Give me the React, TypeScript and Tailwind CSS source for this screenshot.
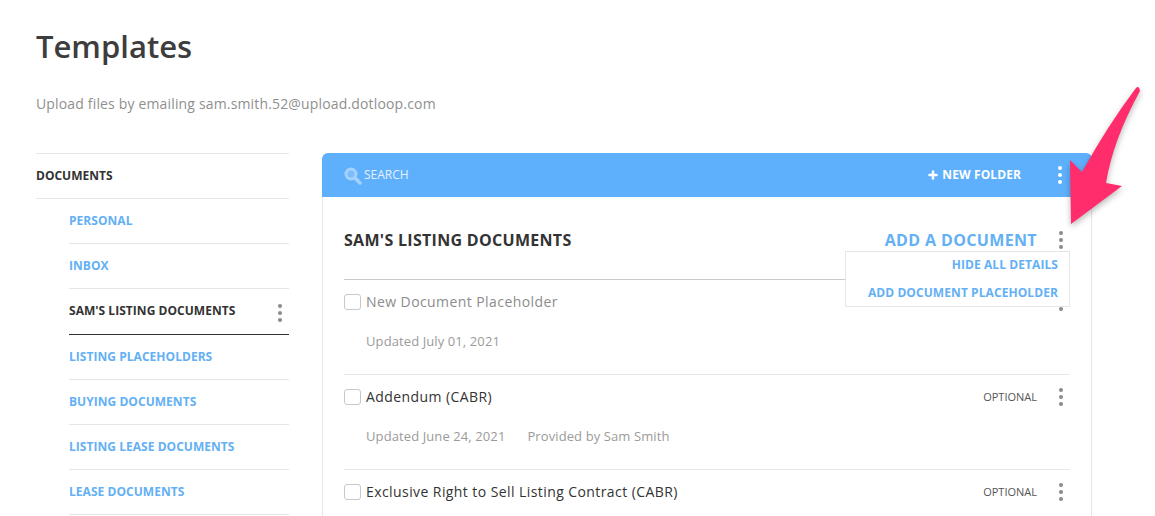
import { Plus } from "lucide-react";

const folders = [
  { name: "PERSONAL" },
  { name: "INBOX" },
  { name: "SAM'S LISTING DOCUMENTS", active: true },
  { name: "LISTING PLACEHOLDERS" },
  { name: "BUYING DOCUMENTS" },
  { name: "LISTING LEASE DOCUMENTS" },
  { name: "LEASE DOCUMENTS" },
];

const documents = [
  { name: "New Document Placeholder", updated: "Updated July 01, 2021", placeholder: true },
  { name: "Addendum (CABR)", updated: "Updated June 24, 2021", provider: "Provided by Sam Smith", tag: "OPTIONAL" },
  { name: "Exclusive Right to Sell Listing Contract (CABR)", updated: "", tag: "OPTIONAL" },
];

function Dots({ className }: { className: string }) {
  return (
    <div className={`flex flex-col gap-[3px] ${className}`}>
      <span className="h-1 w-1 rounded-full bg-current" />
      <span className="h-1 w-1 rounded-full bg-current" />
      <span className="h-1 w-1 rounded-full bg-current" />
    </div>
  );
}

function Sidebar() {
  return (
    <aside className="w-[253px] shrink-0">
      <div className="flex h-[46px] items-center border-y border-[#e6e6e6] text-xs font-bold text-[#333]">DOCUMENTS</div>
      <ul className="pl-[33px]">
        {folders.map((f) => (
          <li
            key={f.name}
            className={`flex items-center justify-between border-b pb-[1px] text-xs font-bold tracking-[0.04px] ${
              f.active ? "h-[46px] border-[#333] text-[#333]" : "h-[45px] border-[#e6e6e6] text-[#64b0f4]"
            }`}
          >
            {f.name}
            {f.active && <Dots className="mr-[7px] mt-[4px] text-[#8a8a8a]" />}
          </li>
        ))}
      </ul>
    </aside>
  );
}

function DocumentRow({ doc }: { doc: (typeof documents)[number] }) {
  return (
    <div className="h-[95px] border-b border-[#e8e8e8] pt-3">
      <div className="flex h-[20px] items-center">
        <span className="h-4 w-[17px] rounded-[3px] border border-[#c8c8c8]" />
        <span className={`ml-[5px] text-sm font-medium tracking-[0.42px] ${doc.placeholder ? "text-[#8c8c8c]" : "text-[#333]"}`}>
          {doc.name}
        </span>
        {doc.tag && <span className="ml-auto text-[11px] text-[#555]">{doc.tag}</span>}
        {doc.tag && <Dots className="ml-[22px] mr-[7px] text-[#8a8a8a]" />}
      </div>
      <div className="mt-[20px] flex gap-[22px] pl-[22px] text-[13px] tracking-[0.1px] text-[#9b9b9b]">
        {doc.updated && <span>{doc.updated}</span>}
        {doc.provider && <span>{doc.provider}</span>}
      </div>
    </div>
  );
}

function Panel() {
  return (
    <section className="relative w-[770px] shrink-0">
      <div className="flex h-[44px] items-center rounded-t-md bg-[#5fb0fc] pl-[22px] pr-[30px] text-white">
        <svg width="18" height="18" viewBox="0 0 18 18" stroke="#a3d2fd" fill="#7dbdfc" className="mt-[2px]">
          <circle cx="7" cy="7" r="5" strokeWidth="3" />
          <path d="M11 11l5 5" strokeWidth="3.5" strokeLinecap="round" />
        </svg>
        <span className="ml-[2px] text-xs text-[#e4f1fe]">SEARCH</span>
        <Plus size={12} strokeWidth={5} className="ml-auto" />
        <span className="ml-[3px] text-xs font-bold tracking-[0.1px]">NEW FOLDER</span>
        <Dots className="ml-[37px] text-white" />
      </div>
      <div className="border-x border-[#e6e6e6] px-[21px]">
        <div className="flex h-[83px] items-center border-b border-[#c9c9c9] pt-[4px]">
          <h2 className="text-base font-bold tracking-[0.3px] text-[#333]">SAM'S LISTING DOCUMENTS</h2>
          <span className="ml-auto text-base font-bold tracking-[0.36px] text-[#64b0f4]">ADD A DOCUMENT</span>
          <Dots className="ml-[22px] mr-[7px] text-[#8a8a8a]" />
        </div>
        {documents.map((d) => (
          <DocumentRow key={d.name} doc={d} />
        ))}
      </div>
      <div className="absolute right-[22px] top-[98px] flex h-[56px] w-[225px] flex-col items-end justify-center gap-[13px] border border-[#e6e6e6] bg-white pb-[2px] pr-[11px] text-xs font-bold leading-[15px] tracking-[0.08px] text-[#64b0f4]">
        <span>HIDE ALL DETAILS</span>
        <span>ADD DOCUMENT PLACEHOLDER</span>
      </div>
      <div className="absolute right-[29px] top-[154px] h-[5px] overflow-hidden text-[#8a8a8a]">
        <span className="block h-1 w-1 rounded-full bg-current" />
      </div>
    </section>
  );
}

export default function App() {
  return (
    <div className="relative h-[516px] w-[1155px] overflow-hidden bg-white pl-9 font-['Open_Sans',sans-serif]">
      <h1 className="pt-[25px] text-[31px] font-semibold leading-[42px] text-[#3d3d3d]">Templates</h1>
      <p className="mt-[28px] text-sm leading-[18px] tracking-[0.16px] text-[#8f8f8f]">Upload files by emailing sam.smith.52@upload.dotloop.com</p>
      <div className="mt-[40px] flex gap-[33px]">
        <Sidebar />
        <Panel />
      </div>
      <svg className="absolute left-[1060px] top-[80px] drop-shadow-[0_3px_3px_rgba(0,0,0,0.28)]" width="90" height="150" viewBox="1060 80 90 150">
        <path
          d="M1136 88 Q1139 85 1140 91 Q1113 140 1106 183 L1122 186 L1071 224 L1070 160 L1082 172 Q1108 125 1136 88 Z"
          fill="#ff2d6c"
        />
      </svg>
    </div>
  );
}
